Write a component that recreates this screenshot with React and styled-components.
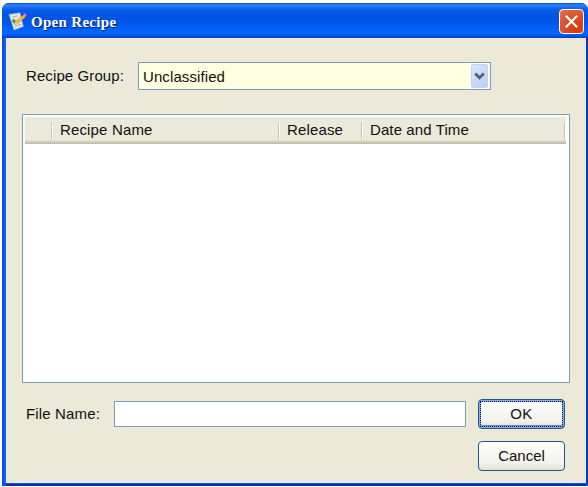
import React from "react";
import styled, { createGlobalStyle } from "styled-components";

const GlobalStyle = createGlobalStyle`
  * { box-sizing: border-box; }
  body { margin: 0; background: #fff; overflow: hidden; }
`;

const Window = styled.main`
  width: 586px;
  height: 483px;
  margin: 3px 0 0 2px;
  display: flex;
  flex-direction: column;
  border-radius: 7px 7px 0 0;
  overflow: hidden;
  background: #0a4fe4;
  color: #111;
  font: 15px/18px "Liberation Sans", Arial, sans-serif;
`;

const TitleBar = styled.header`
  height: 35px;
  flex: none;
  display: flex;
  align-items: center;
  padding: 1px 4px 0 6px;
  background: linear-gradient(
    #0a4bc8 0, #2f86fa 2px, #1c6cf2 4px, #0559e6 8px, #0054e3 16px,
    #0059ee 22px, #0264fc 27px, #0264fc 31px, #0048d0 34px, #0040b8 35px
  );
`;

const Title = styled.h1`
  flex: 1;
  margin: 0 0 0 3px;
  padding-top: 2px;
  color: #fff;
  font: bold 15px/18px "Liberation Serif", "Times New Roman", serif;
  letter-spacing: 0.3px;
  text-shadow: 1px 1px 1px #07227a;
`;

const CloseButton = styled.button`
  width: 25px;
  height: 25px;
  margin-top: 1px;
  padding: 0;
  display: grid;
  place-items: center;
  border: 1px solid #fff;
  border-radius: 4px;
  background: radial-gradient(circle at 75% 85%, #d93a0c 0, #dc4a22 45%, #e37252 100%);
`;

const Body = styled.section`
  flex: 1;
  margin: 0 2px 3px 4px;
  padding: 23px 15px 0 17px;
  background: #ece9d8;
  box-shadow: 0 1px 0 #0b50e8, 0 3px 0 #0630b4, 2px 0 0 #0636bd, -2px 0 0 #1560f5;
`;

const FieldRow = styled.div`
  display: flex;
  align-items: center;
  height: 30px;
`;

const Label = styled.label`
  width: ${(p) => p.$width}px;
  padding-left: 3px;
  letter-spacing: ${(p) => p.$spacing}px;
  white-space: nowrap;
`;

const Select = styled.div`
  width: 353px;
  height: 28px;
  display: flex;
  align-items: center;
  justify-content: space-between;
  padding: 1px 2px 1px 4px;
  border: 1px solid #7f9db9;
  background: #ffffe1;
  letter-spacing: 0.1px;
`;

const SelectValue = styled.span`
  padding-top: 2px;
`;

const DropArrow = styled.span`
  width: 17px;
  height: 24px;
  display: grid;
  place-items: center;
  border: 1px solid #c2d2f5;
  border-radius: 2px;
  background: linear-gradient(135deg, #dce7fe, #b9cdf7);
  box-shadow: 0 0 0 1px #fff;
`;

const Table = styled.div`
  width: 548px;
  height: 269px;
  margin-top: 23px;
  margin-left: -1px;
  padding: 1px 3px 0 1px;
  border: 1px solid #7f9db9;
  background: #fff;
`;

const HeaderRow = styled.div`
  height: 28px;
  display: grid;
  grid-template-columns: 27px 227px 83px 203px 1px;
  align-items: center;
  border-top: 1px solid #faf9f2;
  border-left: 1px solid #faf9f2;
  background: linear-gradient(#ebe9d9 0, #ebe9d9 23px, #dad7c6 24px, #ceccb9 25px, #bdbaa7 27px);
`;

const HeaderCell = styled.div`
  height: 17px;
  padding-left: 8px;
  line-height: 16px;
  letter-spacing: ${(p) => p.$spacing || 0.15}px;
  border-right: 1px solid #c8c5b4;
  box-shadow: 1px 0 0 #fff;
  white-space: nowrap;
`;

const Footer = styled.div`
  display: flex;
  margin-top: 16px;
`;

const FileInput = styled.input`
  width: 352px;
  height: 26px;
  padding: 0 5px;
  border: 1px solid #7f9db9;
  background: #fff;
  font: inherit;
  outline: none;
`;

const Actions = styled.div`
  display: flex;
  flex-direction: column;
  gap: 12px;
  margin-left: 12px;
`;

const Button = styled.button`
  width: 87px;
  height: 30px;
  padding: 1px;
  color: #111;
  font: inherit;
  letter-spacing: ${(p) => p.$spacing}px;
  border: 1px solid #1f568f;
  border-radius: 4px;
  background: linear-gradient(#fff, #f3f2eb 75%, #e2dfd2);
  box-shadow: ${(p) => (p.$primary ? "inset 0 0 0 2px #8cabea, inset 0 -2px 0 1px #6684d2" : "none")};
`;

const Focus = styled.span`
  width: 100%;
  height: 100%;
  display: grid;
  place-items: center;
  border: ${(p) => (p.$active ? "1px dotted #10183a" : "1px solid transparent")};
`;

const RecipeIcon = () => (
  <svg width="20" height="20" viewBox="0 0 20 20" aria-hidden="true">
    <path d="M1 3.4 12 1.7 15.4 15.5 6 19Z" fill="#e2e7e6" stroke="#9eb1b8" strokeWidth=".7" />
    <path d="m4 6 6-1.2M7 15l6-1.6" stroke="#a2b5af" />
    <path d="m3.6 9.5 2.8-1.7 1.6 2.7-2 2.5Z" fill="#55915a" />
    <path d="m6.5 13.5 1.5-3.4 7.6-6 1.9 2-7.5 6Z" fill="#f4bd3d" stroke="#c97927" strokeWidth=".5" />
    <path d="m15 4.2 1.2-2q2 .2 2.3 2L17.2 6Z" fill="#ee76a0" />
    <path d="m6.5 13.5 1.2-2.6 1.7 1.5Z" fill="#e5d8b3" />
  </svg>
);

const CloseIcon = () => (
  <svg width="17" height="17" viewBox="0 0 17 17" aria-hidden="true">
    <path d="m2.8 2.8 11.4 11.4M14.2 2.8 2.8 14.2" stroke="#fff" strokeWidth="2.2" />
  </svg>
);

const ChevronIcon = () => (
  <svg width="11" height="8" viewBox="0 0 11 8" aria-hidden="true">
    <path d="m1.2 1.5 4.3 4.2 4.3-4.2" fill="none" stroke="#4d6185" strokeWidth="2.8" />
  </svg>
);

export default function App() {
  return (
    <>
      <GlobalStyle />
      <Window>
        <TitleBar>
          <RecipeIcon />
          <Title>Open Recipe</Title>
          <CloseButton aria-label="Close"><CloseIcon /></CloseButton>
        </TitleBar>
        <Body>
          <FieldRow>
            <Label $width={115} $spacing={0.1}>Recipe Group:</Label>
            <Select>
              <SelectValue>Unclassified</SelectValue>
              <DropArrow><ChevronIcon /></DropArrow>
            </Select>
          </FieldRow>
          <Table>
            <HeaderRow>
              <HeaderCell />
              <HeaderCell>Recipe Name</HeaderCell>
              <HeaderCell>Release</HeaderCell>
              <HeaderCell $spacing={0.1}>Date and Time</HeaderCell>
            </HeaderRow>
          </Table>
          <Footer>
            <FieldRow>
              <Label $width={91} $spacing={0.15}>File Name:</Label>
              <FileInput aria-label="File Name" />
            </FieldRow>
            <Actions>
              <Button $primary $spacing={0.5}><Focus $active>OK</Focus></Button>
              <Button $spacing={0}><Focus>Cancel</Focus></Button>
            </Actions>
          </Footer>
        </Body>
      </Window>
    </>
  );
}
